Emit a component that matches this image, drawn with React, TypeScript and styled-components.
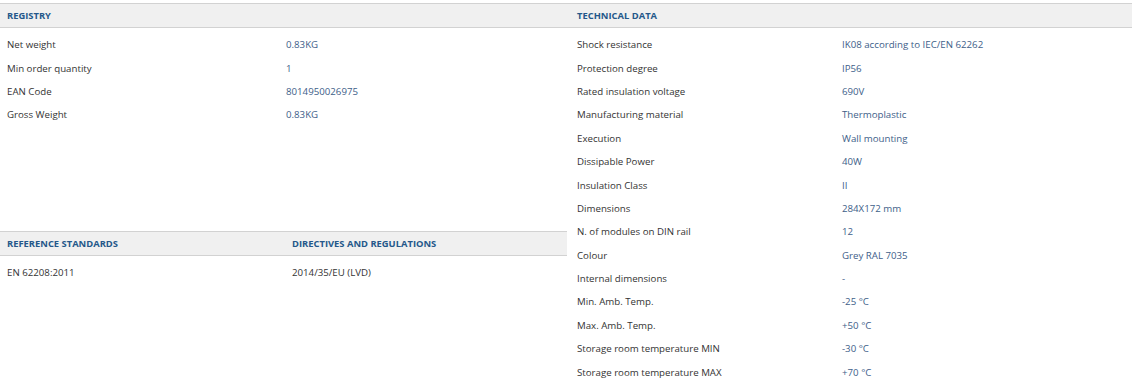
import styled, { createGlobalStyle } from 'styled-components';

const GlobalStyle = createGlobalStyle`
    html, body {
        margin: 0;
        padding: 0;
        background: #ffffff;
    }
    body {
        font-family: "Open Sans", "Liberation Sans", sans-serif;
        font-size: 9.7px;
        color: #333333;
    }
`

const Page = styled.div`
    width: 1132px;
    padding-top: 3px;
    display: grid;
    grid-template-columns: 567px 565px;
`

const Column = styled.div`
    display: flex;
    flex-direction: column;
`

const Table = styled.div<{gap?: number}>`
    margin-top: ${(props) => props.gap || 0}px;
`

const Head = styled.div<{split: number}>`
    display: grid;
    grid-template-columns: ${(props) => props.split}px 1fr;
    height: 23px;
    align-items: center;
    background-color: #f0f0f0;
    border-top: 1px solid #d2d2d2;
    border-bottom: 1px solid #d2d2d2;
    color: #25588a;
    font-weight: 700;
    font-size: 9.4px;
    text-transform: uppercase;
`

const Body = styled.div`
    padding-top: 5px;
`

const Row = styled.div<{split: number}>`
    display: grid;
    grid-template-columns: ${(props) => props.split}px 1fr;
    height: 23.4px;
    align-items: center;
`

const Label = styled.div`
    padding-left: 7px;
    color: #333333;
    white-space: nowrap;
`

const Value = styled.div<{plain?: boolean}>`
    color: ${(props) => props.plain ? "#333333" : "#3e6089"};
    white-space: nowrap;
`

const HeadCell = styled.div`
    padding-left: 7px;
    white-space: nowrap;
`

const registry = [
    ["Net weight", "0.83KG"],
    ["Min order quantity", "1"],
    ["EAN Code", "8014950026975"],
    ["Gross Weight", "0.83KG"],
];

const technical = [
    ["Shock resistance", "IK08 according to IEC/EN 62262"],
    ["Protection degree", "IP56"],
    ["Rated insulation voltage", "690V"],
    ["Manufacturing material", "Thermoplastic"],
    ["Execution", "Wall mounting"],
    ["Dissipable Power", "40W"],
    ["Insulation Class", "II"],
    ["Dimensions", "284X172 mm"],
    ["N. of modules on DIN rail", "12"],
    ["Colour", "Grey RAL 7035"],
    ["Internal dimensions", "-"],
    ["Min. Amb. Temp.", "-25 °C"],
    ["Max. Amb. Temp.", "+50 °C"],
    ["Storage room temperature MIN", "-30 °C"],
    ["Storage room temperature MAX", "+70 °C"],
];

function App() {
    return (
        <>
            <GlobalStyle />
            <Page>
                <Column>
                    <Table>
                        <Head split={279}>
                            <HeadCell>Registry</HeadCell>
                        </Head>
                        <Body>
                            {registry.map(([label, value]) => (
                                <Row split={286} key={label}>
                                    <Label>{label}</Label>
                                    <Value>{value}</Value>
                                </Row>
                            ))}
                        </Body>
                    </Table>
                    <Table gap={104}>
                        <Head split={285}>
                            <HeadCell>Reference standards</HeadCell>
                            <HeadCell>Directives and regulations</HeadCell>
                        </Head>
                        <Body>
                            <Row split={292}>
                                <Label>EN 62208:2011</Label>
                                <Value plain>2014/35/EU (LVD)</Value>
                            </Row>
                        </Body>
                    </Table>
                </Column>
                <Column>
                    <Table>
                        <Head split={275}>
                            <HeadCell style={{paddingLeft: 10}}>Technical data</HeadCell>
                        </Head>
                        <Body>
                            {technical.map(([label, value]) => (
                                <Row split={275} key={label}>
                                    <Label style={{paddingLeft: 10}}>{label}</Label>
                                    <Value>{value}</Value>
                                </Row>
                            ))}
                        </Body>
                    </Table>
                </Column>
            </Page>
        </>
    );
}

export default App;
